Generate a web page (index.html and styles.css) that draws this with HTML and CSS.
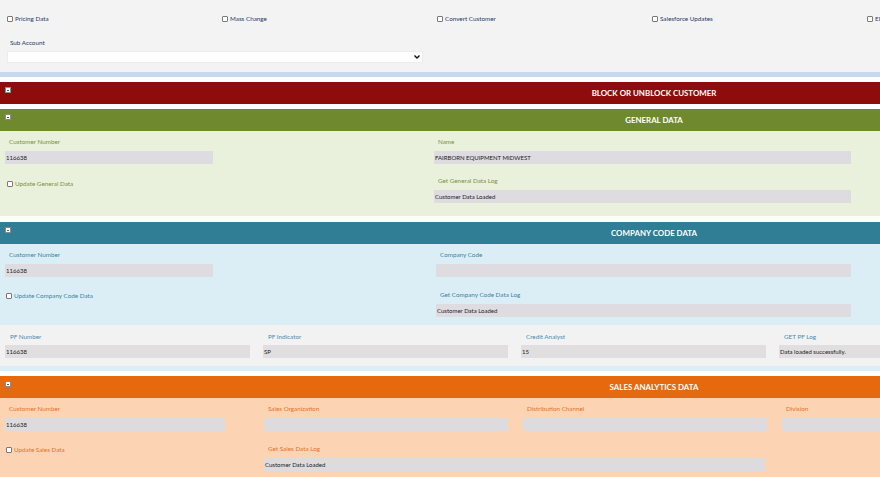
FILE: index.html
```html
<!DOCTYPE html>
<html>
<head>
<meta charset="utf-8">
<link rel="stylesheet" href="styles.css">
</head>
<body>
<div class="page">
  <div class="top">
    <div class="opts">
      <label class="opt"><span class="cb"></span>Pricing Data</label>
      <label class="opt"><span class="cb"></span>Mass Change</label>
      <label class="opt"><span class="cb"></span>Convert Customer</label>
      <label class="opt"><span class="cb"></span>Salesforce Updates</label>
      <label class="opt"><span class="cb"></span>EDI Updates</label>
    </div>
    <div class="sub">
      <div class="sub-lbl">Sub Account</div>
      <div class="select"><svg class="chev" width="6" height="4" viewBox="0 0 6 4"><path d="M0.5 0.5 L3 3 L5.5 0.5" fill="none" stroke="#111" stroke-width="1.4"/></svg></div>
    </div>
  </div>
  <div class="band"></div>

  <section class="sec red">
    <div class="hdr"><span class="tog"></span><h2>BLOCK OR UNBLOCK CUSTOMER</h2></div>
  </section>

  <section class="sec green">
    <div class="hdr"><span class="tog"></span><h2>GENERAL DATA</h2></div>
    <div class="body grid2 g-gen">
      <div class="field"><div class="lbl">Customer Number</div><div class="inp w208">116638</div></div>
      <div class="field"><div class="lbl">Name</div><div class="inp w417">FAIRBORN EQUIPMENT MIDWEST</div></div>
      <label class="chk mt3"><span class="cb"></span>Update General Data</label>
      <div class="field"><div class="lbl">Get General Data Log</div><div class="inp w417">Customer Data Loaded</div></div>
    </div>
  </section>

  <section class="sec teal">
    <div class="hdr"><span class="tog"></span><h2>COMPANY CODE DATA</h2></div>
    <div class="body grid2 g-cc">
      <div class="field"><div class="lbl">Customer Number</div><div class="inp w208">116638</div></div>
      <div class="field"><div class="lbl">Company Code</div><div class="inp w415"></div></div>
      <label class="chk mt1"><span class="cb"></span>Update Company Code Data</label>
      <div class="field"><div class="lbl">Get Company Code Data Log</div><div class="inp w415">Customer Data Loaded</div></div>
    </div>
    <div class="pf">
      <div class="field"><div class="lbl">PF Number</div><div class="inp w245">116638</div></div>
      <div class="field"><div class="lbl">PF Indicator</div><div class="inp w245">SP</div></div>
      <div class="field"><div class="lbl">Credit Analyst</div><div class="inp w245">15</div></div>
      <div class="field"><div class="lbl">GET PF Log</div><div class="inp w245">Data loaded successfully.</div></div>
    </div>
    <div class="strip"></div>
  </section>

  <section class="sec orange">
    <div class="hdr"><span class="tog"></span><h2>SALES ANALYTICS DATA</h2></div>
    <div class="body sales">
      <div class="field"><div class="lbl">Customer Number</div><div class="inp w220">116638</div></div>
      <div class="field"><div class="lbl">Sales Organization</div><div class="inp w244"></div></div>
      <div class="field"><div class="lbl">Distribution Channel</div><div class="inp w244"></div></div>
      <div class="field"><div class="lbl">Division</div><div class="inp w244"></div></div>
      <label class="chk mt1 c1"><span class="cb"></span>Update Sales Data</label>
      <div class="field span2"><div class="lbl">Get Sales Data Log</div><div class="inp w501">Customer Data Loaded</div></div>
    </div>
  </section>
</div>
</body>
</html>
```

FILE: styles.css
```css
html, body {
  margin: 0;
  padding: 0;
  overflow: hidden;
  background: #ffffff;
}
body {
  font-family: Lato, "Noto Sans", sans-serif;
  color: #222;
}
.page {
  width: 1308px;
}

/* top */
.top {
  background: #f3f3f3;
  height: 72px;
  box-sizing: border-box;
  padding-top: 15px;
}
.opts {
  display: grid;
  grid-template-columns: repeat(6, 215px);
  padding-left: 7px;
  height: 8px;
}
.opt, .chk {
  display: flex;
  align-items: center;
  gap: 2px;
  height: 8px;
  font-size: 6.3px;
  line-height: 8px;
  white-space: nowrap;
}
.opt { color: #1f3a68; }
.cb {
  display: inline-block;
  box-sizing: border-box;
  width: 6px;
  height: 6px;
  border: 1px solid #7a7a7a;
  border-radius: 1px;
  background: #fff;
  flex: none;
}
.sub {
  margin-top: 16px;
}
.sub-lbl {
  font-size: 6.3px;
  line-height: 8px;
  height: 8px;
  color: #1f3a68;
  padding-left: 10px;
  margin-bottom: 4px;
}
.select {
  margin-left: 7px;
  width: 416px;
  height: 12px;
  box-sizing: border-box;
  background: #fff;
  border: 1px solid #ececec;
  display: flex;
  align-items: center;
  justify-content: flex-end;
  padding-right: 2px;
}
.band {
  height: 5px;
  background: #c6d9f0;
}

/* sections */
.sec { margin-top: 5px; }
.sec.teal { margin-top: 6px; }
.hdr {
  height: 22px;
  display: grid;
  grid-template-columns: 1fr auto 1fr;
  align-items: center;
}
.hdr h2 {
  grid-column: 2;
  margin: 0;
  color: #fff;
  font-family: Lato, "Open Sans", sans-serif;
  font-weight: 700;
  font-size: 7.9px;
  line-height: 22px;
}
.tog {
  grid-column: 1;
  grid-row: 1;
  justify-self: start;
  align-self: start;
  margin: 5px 0 0 5px;
  width: 6px;
  height: 6px;
  box-sizing: border-box;
  background: #fff;
  border: 1px solid #8a8a8a;
  display: flex;
  align-items: center;
  justify-content: center;
}
.tog::after {
  content: "";
  width: 2px;
  height: 1px;
  background: #555;
}
.red .hdr { background: #8e0c0c; }
.green .hdr { background: #6f8a2e; }
.teal .hdr { background: #2f7e95; }
.orange .hdr { background: #e6690d; }
.green .body { background: #e9f0dc; }
.teal .body, .teal .strip { background: #dbeef5; }
.orange .body { background: #fcd4b4; }
.strip { height: 5px; }

.field {
  display: flex;
  flex-direction: column;
}
.lbl {
  height: 8px;
  line-height: 8px;
  font-size: 6.3px;
  padding-left: 4px;
  margin-bottom: 5px;
  white-space: nowrap;
}
.inp {
  height: 13px;
  line-height: 13px;
  font-size: 6px;
  color: #222;
  padding-left: 1px;
  box-sizing: border-box;
  background: #dedce1;
  white-space: nowrap;
  overflow: hidden;
}
.w208 { width: 208px; }
.w415 { width: 415px; }
.w417 { width: 417px; }
.w245 { width: 245px; }
.w244 { width: 244px; }
.w220 { width: 220px; }
.w501 { width: 501px; }

.grid2 {
  display: grid;
  padding-left: 5px;
  align-items: start;
}
.g-gen {
  grid-template-columns: 429px 417px;
  row-gap: 13px;
  padding-top: 7px;
  padding-bottom: 13px;
}
.g-cc {
  grid-template-columns: 431px 415px;
  row-gap: 14px;
  padding-top: 7px;
  padding-bottom: 8px;
}
.chk { padding-left: 2px; }
.mt3 { margin-top: 3px; }
.mt1 { margin-top: 1px; }
.green .lbl, .green .chk { color: #7c923c; }
.teal .lbl, .teal .chk { color: #3b84a0; }
.orange .lbl, .orange .chk { color: #e8711d; }
.g-cc .chk { padding-left: 1px; }

.pf {
  background: #f2f2f2;
  display: grid;
  grid-template-columns: repeat(5, 258px);
  padding: 8px 0 8px 5px;
}
.pf .lbl { padding-left: 5px; margin-bottom: 4px; color: #4a8bb0; }
.pf .inp { background: #e0dede; }

.sales {
  display: grid;
  grid-template-columns: repeat(5, 259px);
  row-gap: 14px;
  padding: 7px 0 10px 5px;
  align-items: start;
}
.sales .chk { padding-left: 1px; }
.sales .inp { background: #dcdce0; }
.c1 { grid-column: 1; }
.span2 { grid-column: 2 / span 2; }
```
